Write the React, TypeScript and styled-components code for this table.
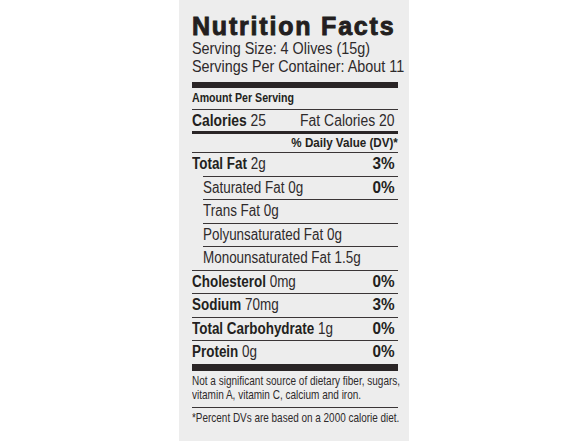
import React from 'react';
import styled, { createGlobalStyle } from 'styled-components';

const ink = '#231f20';
const sans = `"Liberation Sans", Arial, sans-serif`;

const GlobalStyle = createGlobalStyle`
  html, body {
    margin: 0;
    padding: 0;
    background: #ffffff;
  }
  body {
    font-family: ${sans};
    color: ${ink};
  }
`;

const Panel = styled.div`
  width: 230px;
  height: 441px;
  margin: 0 auto;
  background: #ededed;
  padding: 13px 11px 0 13px;
  box-sizing: border-box;
  overflow: hidden;
`;

// the label uses a condensed face; squeeze Liberation Sans horizontally to match
const Squeeze = styled.span<{ $s: number; $right?: boolean }>`
  display: inline-block;
  white-space: nowrap;
  transform: scaleX(${(p) => p.$s});
  transform-origin: ${(p) => (p.$right ? 'right' : 'left')} center;
`;

const Title = styled.h1`
  margin: 0;
  font-weight: 700;
  font-size: 25px;
  line-height: 27px;
  letter-spacing: 1.8px;
  -webkit-text-stroke: 0.9px ${ink};
  white-space: nowrap;
`;

const ServingLine = styled.div`
  font-size: 17px;
  line-height: 18px;
  white-space: nowrap;
  color: #2e2a2b;
`;

const ThickBar = styled.div<{ $h: number; $top?: number }>`
  height: ${(p) => p.$h}px;
  margin-top: ${(p) => p.$top ?? 0}px;
  background: #2a2526;
`;

const AmountHeading = styled.div`
  font-weight: 700;
  font-size: 13px;
  line-height: 15px;
  padding: 2px 0 4px;
  white-space: nowrap;
`;

const CaloriesRow = styled.div`
  display: flex;
  justify-content: space-between;
  align-items: baseline;
  border-top: 1px solid #3a3536;
  padding: 1px 4px 0 0;
  font-size: 16px;
  line-height: 20px;
  white-space: nowrap;
  color: #2e2a2b;
`;

const DVRow = styled.div`
  border-top: 3px solid #2a2526;
  height: 18px;
  font-weight: 700;
  font-size: 13.5px;
  line-height: 18px;
  text-align: right;
  white-space: nowrap;
`;

const NutrientRow = styled.div<{ $sub?: boolean }>`
  display: flex;
  justify-content: space-between;
  align-items: baseline;
  margin-left: ${(p) => (p.$sub ? 11 : 0)}px;
  border-top: 1px solid #3a3536;
  height: 22.5px;
  padding-right: 3px;
  font-size: 16px;
  line-height: 22.5px;
  white-space: nowrap;
  color: #2e2a2b;
`;

const Bold = styled.span`
  font-weight: 700;
  color: ${ink};
`;

const Pct = styled.span`
  font-weight: 700;
  font-size: 17px;
  color: ${ink};
`;

const Note = styled.p<{ $rule?: boolean }>`
  margin: 0;
  font-size: 13px;
  line-height: 14.5px;
  white-space: nowrap;
  color: #2e2a2b;
  padding: ${(p) => (p.$rule ? '2.5px 0 0' : '3px 0 4.5px')};
  border-top: ${(p) => (p.$rule ? `1px solid #3a3536` : 'none')};
`;

type Nutrient = { name: string; amount: string; pct?: string; sub?: boolean };

const nutrients: Nutrient[] = [
  { name: 'Total Fat', amount: '2g', pct: '3%' },
  { name: 'Saturated Fat', amount: '0g', pct: '0%', sub: true },
  { name: 'Trans Fat', amount: '0g', sub: true },
  { name: 'Polyunsaturated Fat', amount: '0g', sub: true },
  { name: 'Monounsaturated Fat', amount: '1.5g', sub: true },
  { name: 'Cholesterol', amount: '0mg', pct: '0%' },
  { name: 'Sodium', amount: '70mg', pct: '3%' },
  { name: 'Total Carbohydrate', amount: '1g', pct: '0%' },
  { name: 'Protein', amount: '0g', pct: '0%' },
];

export default function App() {
  return (
    <>
      <GlobalStyle />
      <Panel>
        <Title>Nutrition Facts</Title>
        <ServingLine>
          <Squeeze $s={0.845}>Serving Size: 4 Olives (15g)</Squeeze>
        </ServingLine>
        <ServingLine>
          <Squeeze $s={0.845}>Servings Per Container: About 11</Squeeze>
        </ServingLine>
        <ThickBar $h={6} $top={6} />
        <AmountHeading>
          <Squeeze $s={0.816}>Amount Per Serving</Squeeze>
        </AmountHeading>
        <CaloriesRow>
          <Squeeze $s={0.867}>
            <Bold>Calories</Bold> 25
          </Squeeze>
          <Squeeze $s={0.87} $right>
            Fat Calories 20
          </Squeeze>
        </CaloriesRow>
        <DVRow>
          <Squeeze $s={0.86} $right>
            % Daily Value (DV)*
          </Squeeze>
        </DVRow>
        {nutrients.map((n) => (
          <NutrientRow key={n.name} $sub={n.sub}>
            <Squeeze $s={0.84}>
              {n.sub ? n.name : <Bold>{n.name}</Bold>} {n.amount}
            </Squeeze>
            {n.pct && (
              <Squeeze $s={0.9} $right>
                <Pct>{n.pct}</Pct>
              </Squeeze>
            )}
          </NutrientRow>
        ))}
        <ThickBar $h={7} />
        <Note>
          <Squeeze $s={0.77}>
            Not a significant source of dietary fiber, sugars,
            <br />
            vitamin A, vitamin C, calcium and iron.
          </Squeeze>
        </Note>
        <Note $rule>
          <Squeeze $s={0.765}>*Percent DVs are based on a 2000 calorie diet.</Squeeze>
        </Note>
      </Panel>
    </>
  );
}
